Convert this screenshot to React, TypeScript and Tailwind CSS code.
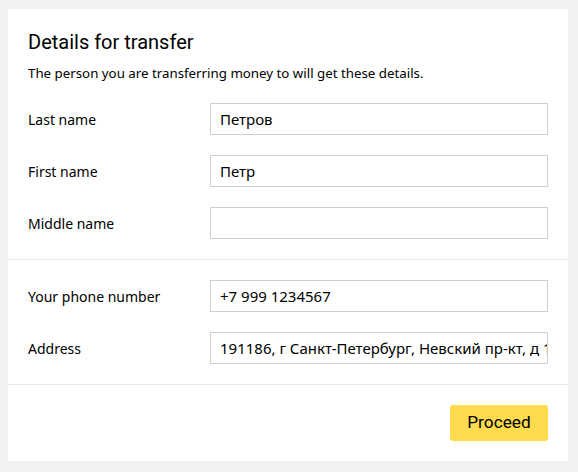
import React from "react";

const font = { fontFamily: '"Noto Sans", Arial, sans-serif' };
const roboto = { fontFamily: 'Roboto, "Noto Sans", sans-serif' };

function Row({ label, value }: { label: string; value: string }) {
  return (
    <div className="flex items-center h-8">
      <div className="w-[182px] shrink-0 text-[14px] text-[#000]">{label}</div>
      <div className="w-[338px] h-8 border border-[#cfcfcf] flex items-center pl-[9px] pr-[1px] overflow-hidden whitespace-nowrap text-[15px] text-[#000]">
        <span className="whitespace-nowrap">{value}</span>
      </div>
    </div>
  );
}

export default function App() {
  return (
    <div className="w-[578px] h-[472px] bg-[#f3f2f0] pt-[9px] px-2" style={font}>
      <div className="w-[560px] h-[452px] bg-white flex flex-col">
        <div className="px-5 pt-[21px]">
          <div className="text-[20px] leading-[24px] text-[#000]" style={roboto}>
            Details for transfer
          </div>
          <div className="text-[13.3px] leading-[18px] mt-[10px] text-[#000]">
            The person you are transferring money to will get these details.
          </div>
        </div>
        <div className="px-5 pt-[21px] pb-5 flex flex-col gap-5">
          <Row label="Last name" value="Петров" />
          <Row label="First name" value="Петр" />
          <Row label="Middle name" value="" />
        </div>
        <div className="h-px bg-[#e6e6e6]" />
        <div className="px-5 py-5 flex flex-col gap-5">
          <Row label="Your phone number" value="+7 999 1234567" />
          <Row label="Address" value="191186, г Санкт-Петербург, Невский пр-кт, д 1" />
        </div>
        <div className="h-px bg-[#e6e6e6]" />
        <div className="px-5 pt-5 flex justify-end">
          <button
            className="w-[98px] h-9 rounded-[3px] bg-[#ffdb4d] text-[17.3px] text-[#000]"
            style={roboto}
          >
            Proceed
          </button>
        </div>
      </div>
    </div>
  );
}
